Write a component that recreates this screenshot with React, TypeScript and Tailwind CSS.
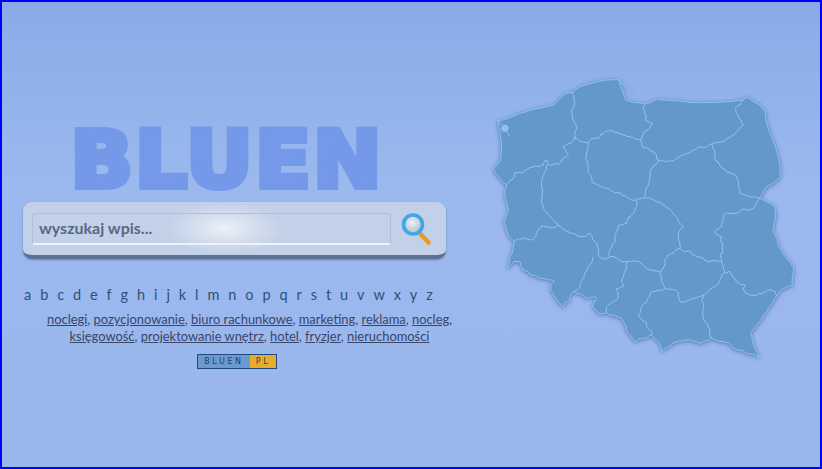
import React from "react";

type P = [number, number];

function pass(points: P[], step: number, amp: number, rnd: () => number): P[] {
  const out: P[] = [points[0]];
  for (let i = 1; i < points.length; i++) {
    const [x0, y0] = points[i - 1];
    const [x1, y1] = points[i];
    const d = Math.hypot(x1 - x0, y1 - y0);
    const n = Math.max(1, Math.round(d / step));
    for (let k = 1; k <= n; k++) {
      const t = k / n;
      const j = k === n ? 0 : amp;
      out.push([x0 + (x1 - x0) * t + rnd() * j * 2, y0 + (y1 - y0) * t + rnd() * j * 2]);
    }
  }
  return out;
}

function jag(points: P[], seed: number, amp: number): string {
  let s = seed * 9301 + 49297;
  const rnd = () => {
    s = (s * 9301 + 49297) % 233280;
    return s / 233280 - 0.5;
  };
  const coarse = pass(points, 5, amp * 1.6, rnd);
  const out = pass(coarse, 2, amp * 0.7, rnd);
  return out.map((p, i) => `${i ? "L" : "M"}${p[0].toFixed(1)} ${p[1].toFixed(1)}`).join("");
}

const north: P[] = [[498.3,120.7],[505,119.3],[520,113.3],[535,109],[554,105],[560,98.3],[566,93.3],[572.7,92.3],[580,86.7],[593.3,82.7],[606.7,80],[618.3,79.3],[623.3,93.3],[625,99.3],[633.3,102.3],[643.3,103.3],[648.3,103.3],[656.7,99],[673.3,100.7],[696.7,102.7],[720,102.3],[743.3,100],[745,97.7],[748.3,97.7],[751.7,100.7],[760,105],[765,111.7],[766,120],[770,133.3],[775,145],[779,158.3],[780.7,176.7],[773.3,183.3],[766.7,186.7],[759.3,198.3]];
const east: P[] = [[759.3,198.3],[766.7,201.7],[775,206.7],[775.5,216],[772.7,230],[776.7,238.3],[778.3,246.7],[788.3,260],[793.3,266.7],[792.3,285],[781.7,289.3],[776.7,296],[766.7,311.7],[750.7,332.7],[755,348.3],[759.3,357.3]];
const south: P[] = [[759.3,357.3],[748.3,354],[733.3,348.3],[728.3,342.7],[711.7,338.3],[700,343.3],[690,340],[676.7,341.7],[670,346.7],[661.7,351.7],[658.3,341.7],[651.7,335],[645,338.3],[635,341.7],[626.7,330],[621.7,318.3],[606,312.7],[598.3,313.3],[592.7,305],[596.7,298.3],[586.7,298.3],[573.3,291.7],[563.3,307.3],[555,298.3],[550,290],[554,280.7],[540,278.3],[523.3,270],[520,261.7],[513.3,261.7],[507.3,268.3]];
const west: P[] = [[507.3,268.3],[513.3,248.3],[514,241.7],[508.3,235],[504,221.7],[508.3,210],[505,196.7],[506.7,185],[500,178.3],[493.3,169.3],[500,161.7],[501.7,146.7],[500,130],[498.3,120.7]];

const inner: P[][] = [
  [[572.7,92.3],[575,103.3],[571.7,110],[575,123.3],[576.7,126.7],[575,138.3],[588.3,142.7],[591.7,138.3],[598.3,138.3],[605,131.7],[610,130.7],[623.3,135],[630,136.7],[641,139.3]],
  [[641,139.3],[643.3,133.3],[648.3,129.3],[652.7,123.3],[645,120],[643.3,106.7],[646,103.3]],
  [[641,139.3],[643.3,147.3],[655,153.3],[658.3,160]],
  [[658.3,160],[673.3,160.7],[680,156],[693.3,150],[700,146.7],[711.7,144],[723.3,141.7],[733.3,135],[743.3,125],[735,108.3],[743.3,100]],
  [[711.7,144],[715,160],[726.7,171.7],[736.7,176.7],[740,193.3],[759.3,198.3]],
  [[759.3,198.3],[753.3,208.3],[733.3,213.3],[723.3,215],[721.7,226.7],[715,231.7],[721.7,236.7],[721.7,261.7],[725,272.7]],
  [[725,272.7],[730,271.7],[735,280],[745,285],[743.3,290],[750,295],[763.3,293.3],[771.7,290],[776.7,296]],
  [[725,272.7],[716.7,285],[703.3,295],[690,300],[680,301.7],[675,290],[665,288.3]],
  [[703.3,295],[702.7,313.3],[708.3,325],[711.7,338.3]],
  [[665,288.3],[650,293.3],[645,303.3],[638.3,315],[646.7,323.3],[651.7,335]],
  [[658.3,160],[650,173.3],[648.3,185],[643.3,198.3]],
  [[588.3,142.7],[586.7,151.7],[588,168.3],[591.7,181.7],[613.3,191.7],[626.7,196.7],[635,200],[643.3,198.3]],
  [[643.3,198.3],[661.7,203.3],[673.3,213.3],[683.3,226.7],[678.3,233.3],[680,248.3]],
  [[680,248.3],[693.3,255],[710,261.7],[721.7,261.7]],
  [[680,248.3],[668.3,255],[661.7,270],[660,275],[663.3,285],[665,288.3]],
  [[636.7,200],[635,210],[626.7,223.3],[618.3,225],[615,241.7],[608.3,253.3],[610,256.7]],
  [[610,256.7],[626.7,261.7],[633.3,260.7],[643.3,265],[651.7,270],[660,271.7]],
  [[610,256.7],[601.7,258.3],[598.3,255],[596.7,243.3],[590,233.3],[580,236.7],[565,230],[558.3,225],[550,216.7],[543.3,208.3],[541.7,183.3],[548.3,161.7]],
  [[506.7,185],[515,172.7],[521.7,172.7],[530,167.3],[540,166.7],[545,160.7],[548.3,161.7]],
  [[548.3,165],[560,163.3],[568.3,155],[562.7,146.7],[575,136.7]],
  [[514,241.7],[523.3,238.3],[531.7,240],[541.7,226],[551.7,228.3],[558.3,225]],
  [[593.3,256.7],[586.7,270],[580,286.7],[573.3,291.7]],
  [[626.7,261.7],[621.7,280],[623.3,286.7],[616.7,288.3],[616.7,300],[606.7,306.7],[606,312.7]],
];

const outline =
  jag(north, 3, 0.2) +
  jag(east, 5, 0.4).replace(/^M/, "L") +
  jag(south, 7, 0.8).replace(/^M/, "L") +
  jag(west, 11, 0.5).replace(/^M/, "L") +
  "Z";

function PolandMap() {
  return (
    <svg viewBox="488 73 312 292" width={312} height={292} className="shrink-0 drop-shadow-[0_1px_2px_rgba(40,70,130,0.6)]">
      <path d={outline} fill="#6498cb" stroke="#8cc6f6" strokeWidth={1} strokeLinejoin="round" />
      {inner.map((p, i) => (
        <path key={i} d={jag(p, i + 20, 1)} fill="none" stroke="#8cc6f6" strokeWidth={1} strokeLinejoin="round" />
      ))}
      <path d="M618.3 79.3L620.7 83L626.7 86.7L630.7 91.7" fill="none" stroke="#8cc6f6" strokeWidth={1} />
      <circle cx="505" cy="128.3" r="3.2" fill="#9bb9ee" stroke="#8cc6f6" strokeWidth={1} />
      <path d="M498.3 120.7L502 125M507 132L509.5 136" fill="none" stroke="#8cc6f6" strokeWidth={1} />
    </svg>
  );
}

function Magnifier() {
  return (
    <svg width={32} height={34} viewBox="0 0 32 34" className="shrink-0">
      <defs>
        <radialGradient id="lens" cx="0.45" cy="0.4" r="0.65">
          <stop offset="0" stopColor="#eef1f6" />
          <stop offset="1" stopColor="#a9b8d0" />
        </radialGradient>
      </defs>
      <line x1="20.5" y1="22" x2="28.5" y2="30.5" stroke="#ea9a22" strokeWidth={4.5} strokeLinecap="round" />
      <circle cx="13" cy="12.5" r="9.5" fill="url(#lens)" stroke="#3fa8e2" strokeWidth={3.6} />
    </svg>
  );
}

const letters = "abcdefghijklmnopqrstuvwxyz".split("");
const row1 = ["noclegi", "pozycjonowanie", "biuro rachunkowe", "marketing", "reklama", "nocleg"];
const row2 = ["księgowość", "projektowanie wnętrz", "hotel", "fryzjer", "nieruchomości"];

function Tags({ items, trailing }: { items: string[]; trailing: boolean }) {
  return (
    <div className="whitespace-nowrap text-center leading-[17px]">
      {items.map((t, i) => (
        <React.Fragment key={t}>
          <a className="underline">{t}</a>
          {i < items.length - 1 || trailing ? ", " : ""}
        </React.Fragment>
      ))}
    </div>
  );
}

export default function App() {
  return (
    <div
      className="flex h-[469px] w-[822px] overflow-hidden border-2 border-[#0000ff] bg-gradient-to-b from-[#88abe8] via-[#9bb9ee] via-40% to-[#9ab7ec]"
      style={{ fontFamily: 'Lato, "Open Sans", sans-serif' }}
    >
      <div className="flex w-[486px] shrink-0 flex-col pt-[119px]">
        <div
          className="ml-[72px] flex h-[77px] w-[306px] origin-top [scale:1.05_1.01] justify-center text-[78px] leading-[77px] font-bold tracking-[2px] whitespace-nowrap text-[#7499e8] [-webkit-text-stroke:6px_#7499e8]"
          style={{ fontFamily: '"DejaVu Sans", sans-serif' }}
        >
          BLUEN
        </div>

        <div className="relative mt-[4px] ml-[21px] flex h-[57px] w-[423px] items-center overflow-hidden rounded-[9px] border-b-[4px] border-[#5d7196] bg-[#c3d1e8] pr-[12px] pl-[9px] shadow-[0_1px_2px_rgba(60,80,120,0.5)]">
          <div className="pointer-events-none absolute inset-y-0 left-[142px] w-[120px] bg-[radial-gradient(ellipse_at_center,rgba(255,255,255,0.7)_0%,rgba(255,255,255,0.35)_30%,rgba(255,255,255,0)_68%)]" />
          <div className="relative flex h-[32px] w-[359px] items-center rounded-[3px] border border-b-2 border-[#aebedb] border-b-[#eef3fb] pl-[6px] text-[16px] font-bold text-[#5a6686]">
            wyszukaj wpis...
          </div>
          <div className="relative ml-[9px]">
            <Magnifier />
          </div>
        </div>

        <div className="mt-[26px] ml-[22px] flex w-[409px] justify-between text-[14.5px] leading-[20px] text-[#2b5378]">
          {letters.map((l) => (
            <span key={l}>{l}</span>
          ))}
        </div>

        <div className="mt-[6px] ml-[45px] w-[405px] text-[12.9px] text-[#39456a]">
          <Tags items={row1} trailing />
          <Tags items={row2} trailing={false} />
        </div>

        <div className="mt-[9px] ml-[195px] flex h-[15px] w-[80px] border border-[#1d4a80] text-[8px] leading-[13px] tracking-[2.6px] text-[#1d3f70]" style={{ fontFamily: '"DejaVu Sans", sans-serif' }}>
          <span className="w-[52px] bg-[#6c9ad0] text-center">BLUEN</span>
          <span className="flex-1 bg-[#e8ac2c] text-center">PL</span>
        </div>
      </div>

      <div className="mt-[71px]">
        <PolandMap />
      </div>
    </div>
  );
}
